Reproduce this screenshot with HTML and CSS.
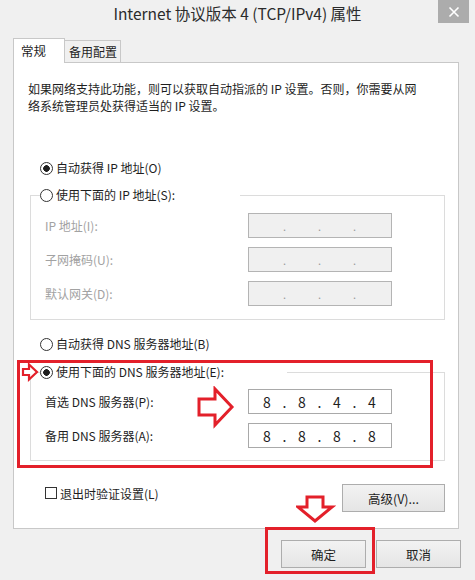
FILE: index.html
```html
<!DOCTYPE html>
<html lang="zh-CN">
  <head>
    <meta charset="UTF-8" />
    <meta name="viewport" content="width=device-width, initial-scale=1.0" />
    <title>Internet 协议版本 4 (TCP/IPv4) 属性</title>
    <link rel="stylesheet" href="styles.css">
  </head>
  <body>
    <div class="window">
      <div class="titlebar">
        <span></span>
        <h1 class="title">Internet 协议版本 4 (TCP/IPv4) 属性</h1>
        <button class="close">
          <svg width="12" height="12" viewBox="0 0 12 12"><path d="M1.5 1.5 L10.5 10.5 M10.5 1.5 L1.5 10.5" stroke="#fff" stroke-width="1.6"/></svg>
        </button>
      </div>

      <div class="main">
        <div class="tabs">
          <div class="tab tab--active">常规</div>
          <div class="tab">备用配置</div>
        </div>

        <div class="panel">
          <p class="desc">如果网络支持此功能，则可以获取自动指派的 IP 设置。否则，你需要从网<br>络系统管理员处获得适当的 IP 设置。</p>

          <div class="radio radio--on radio--first"><span class="mark"></span>自动获得 IP 地址(O)</div>

          <fieldset class="group group--ip">
            <legend class="legend legend--ip"><span class="radio"><span class="mark"></span>使用下面的 IP 地址(S):</span></legend>
            <div class="rows rows--ip">
              <span class="label label--off">IP 地址(I):</span>
              <div class="ip ip--off"><span></span><i>.</i><span></span><i>.</i><span></span><i>.</i><span></span></div>
              <span class="label label--off">子网掩码(U):</span>
              <div class="ip ip--off"><span></span><i>.</i><span></span><i>.</i><span></span><i>.</i><span></span></div>
              <span class="label label--off">默认网关(D):</span>
              <div class="ip ip--off"><span></span><i>.</i><span></span><i>.</i><span></span><i>.</i><span></span></div>
            </div>
          </fieldset>

          <div class="radio radio--dns"><span class="mark"></span>自动获得 DNS 服务器地址(B)</div>

          <fieldset class="group group--dns">
            <legend class="legend legend--dns"><span class="radio radio--on"><span class="mark"></span>使用下面的 DNS 服务器地址(E):</span></legend>
            <div class="rows rows--dns">
              <span class="label">首选 DNS 服务器(P):</span>
              <div class="ip"><span>8</span><i>.</i><span>8</span><i>.</i><span>4</span><i>.</i><span>4</span></div>
              <span class="label">备用 DNS 服务器(A):</span>
              <div class="ip"><span>8</span><i>.</i><span>8</span><i>.</i><span>8</span><i>.</i><span>8</span></div>
            </div>
          </fieldset>

          <div class="options">
            <div class="check"><span class="box"></span>退出时验证设置(L)</div>
            <button class="btn btn--adv">高级(V)...</button>
          </div>
        </div>

        <div class="footer">
          <button class="btn">确定</button>
          <button class="btn">取消</button>
        </div>
      </div>

      <!-- red annotations drawn over the dialog -->
      <div class="mark-box mark-box--dns"></div>
      <div class="mark-box mark-box--ok"></div>
      <svg class="arrow arrow--small" width="20" height="20" viewBox="0 0 20 20">
        <polygon points="2,7 8,7 8,2.5 16,10 8,17.5 8,13 2,13" fill="#fff" stroke="#e3202a" stroke-width="2.2" stroke-linejoin="miter"/>
      </svg>
      <svg class="arrow arrow--right" width="40" height="44" viewBox="0 0 40 44">
        <polygon points="3,13 19,13 19,3 36,21 19,39 19,29 3,29" fill="#fff" stroke="#e3202a" stroke-width="3"/>
      </svg>
      <svg class="arrow arrow--down" width="40" height="30" viewBox="0 0 40 30">
        <polygon points="11,2 27,2 27,12 36,12 19,26 2,12 11,12" fill="#fff" stroke="#e3202a" stroke-width="3"/>
      </svg>
    </div>
  </body>
</html>
```

FILE: styles.css
```css
* {
  box-sizing: border-box;
}
body {
  margin: 0;
  background: #f0f0f0;
  font-family: "Noto Sans CJK SC", "Noto Sans", sans-serif;
  font-size: 12px;
  color: #1e1e1e;
}
.window {
  position: relative;
  width: 475px;
  height: 580px;
  background: #f0f0f0;
  overflow: hidden;
}

/* title bar */
.titlebar {
  display: grid;
  grid-template-columns: 1fr auto 1fr;
  align-items: start;
  height: 28px;
}
.title {
  margin: 0;
  height: 27px;
  line-height: 27px;
  font-size: 15.5px;
  font-weight: normal;
  color: #2b2b2b;
}
.close {
  justify-self: end;
  width: 31px;
  height: 23px;
  margin-right: 6px;
  border: none;
  padding: 0;
  background: #acacac;
  display: flex;
  align-items: center;
  justify-content: center;
}

.main {
  padding: 10px 14px 0 13px;
}

/* tabs */
.tabs {
  display: flex;
  align-items: flex-end;
  height: 24px;
}
.tab {
  height: 22px;
  line-height: 21px;
  padding: 0 3px 0 4px;
  border: 1px solid #c8c8c8;
  border-bottom: none;
  border-left: none;
  background: #f0f0f0;
  font-size: 12px;
}
.tab--active {
  position: relative;
  z-index: 1;
  height: 25px;
  margin-bottom: -1px;
  padding: 0 18px 0 7px;
  line-height: 24px;
  border-left: 1px solid #c8c8c8;
  background: #fff;
  font-size: 12.5px;
}

/* main panel */
.panel {
  width: 446px;
  border: 1px solid #c8c8c8;
  background: #fff;
  padding: 17px 13px 16px 14px;
}
.desc {
  margin: 0;
  line-height: 17px;
}

.radio {
  display: flex;
  align-items: center;
  gap: 3px;
  height: 18px;
  line-height: 18px;
}
.mark {
  width: 13px;
  height: 13px;
  border: 1px solid #333;
  border-radius: 50%;
  background: #fff;
  flex: none;
}
.radio--on .mark {
  background: radial-gradient(circle, #1e1e1e 0 3px, #fff 3.6px);
}
.radio--first {
  margin: 45px 0 0 12px;
}
.radio--dns {
  margin: 15px 0 0 12px;
}

/* group boxes */
.group {
  margin: 0 0 0 2px;
  padding: 0;
  border: 1px solid #dcdcdc;
  min-width: 0;
}
.group--ip {
  margin-top: 9px;
}
.group--dns {
  margin-top: 10px;
}
.legend {
  margin-left: 9px;
  padding: 0;
  background: #fff;
}
.legend--ip {
  width: 200px;
}
.legend--dns {
  width: 247px;
}
.rows {
  display: grid;
  grid-template-columns: 203px 144px;
  align-items: center;
  row-gap: 9px;
  padding-left: 14px;
}
.rows--ip {
  padding-top: 9px;
  padding-bottom: 13px;
}
.rows--dns {
  padding-top: 8px;
  padding-bottom: 12px;
}
.label--off {
  color: #a2a2a2;
}
.ip {
  display: flex;
  height: 25px;
  align-items: center;
  padding-left: 5px;
  border: 1px solid #a9a9a9;
  background: #fff;
  font-size: 14px;
}
.ip span {
  width: 26px;
  text-align: center;
}
.ip i {
  width: 9px;
  font-style: normal;
  text-align: center;
}
.ip--off {
  background: #f0f0f0;
  border-color: #b4b4b4;
  color: #9a9a9a;
  font-size: 11px;
}

/* bottom of panel */
.options {
  display: flex;
  justify-content: space-between;
  align-items: flex-start;
  margin-top: 23px;
}
.check {
  display: flex;
  align-items: center;
  gap: 3px;
  height: 18px;
  margin-left: 17px;
}
.box {
  width: 12px;
  height: 12px;
  border: 1px solid #333;
  background: #fff;
}
.btn {
  width: 85px;
  height: 28px;
  border: 1px solid #adadad;
  background: linear-gradient(#f2f2f2, #e5e5e5);
  font-family: inherit;
  font-size: 12.5px;
  color: #1e1e1e;
  padding: 0;
}
.btn--adv {
  width: 103px;
}
.footer {
  display: flex;
  justify-content: flex-end;
  gap: 10px;
  margin-top: 11px;
}

/* annotations */
.mark-box {
  position: absolute;
  border: 3px solid #e3202a;
}
.mark-box--dns {
  left: 17px;
  top: 360px;
  width: 416px;
  height: 108px;
}
.mark-box--ok {
  left: 265px;
  top: 527px;
  width: 110px;
  height: 47px;
}
.arrow {
  position: absolute;
}
.arrow--small {
  left: 21px;
  top: 362px;
}
.arrow--right {
  left: 196px;
  top: 386px;
}
.arrow--down {
  left: 296px;
  top: 495px;
}
```
